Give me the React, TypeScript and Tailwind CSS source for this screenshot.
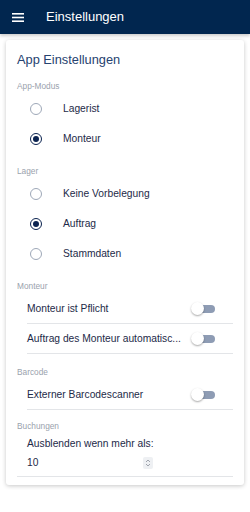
import React from "react";

const FONT = { fontFamily: '"Liberation Sans", Arial, sans-serif' };

function Radio({ checked }: { checked?: boolean }) {
  return (
    <span
      className={
        "flex h-[12px] w-[12px] items-center justify-center rounded-full border-[1.5px] " +
        (checked ? "border-[#0b2350]" : "border-[#9ea8b8]")
      }
    >
      {checked && <span className="h-[6px] w-[6px] rounded-full bg-[#0b2350]" />}
    </span>
  );
}

function Toggle() {
  return (
    <span className="relative flex h-[13px] w-[25px] items-center">
      <span className="ml-[4px] h-[8px] w-[20px] rounded-full bg-[#8e9cb4]" />
      <span className="absolute left-0 top-0 h-[13px] w-[13px] rounded-full bg-white shadow-[0_1px_2px_rgba(0,0,0,0.35)]" />
    </span>
  );
}

function SectionLabel({ children, className = "" }: { children: React.ReactNode; className?: string }) {
  return (
    <div className={"mb-[2px] flex h-[12px] items-center text-[8.3px] text-[#9aa2ad] " + className}>
      {children}
    </div>
  );
}

function RadioRow({ label, checked }: { label: string; checked?: boolean }) {
  return (
    <div className="flex h-[30px] items-center pl-[13px]">
      <Radio checked={checked} />
      <span className="ml-[21px] text-[10.25px] text-[#1d2a48]">{label}</span>
    </div>
  );
}

function ToggleRow({ label }: { label: string }) {
  return (
    <div className="ml-[10px] flex h-[30px] items-center border-b border-[#e3e5e8] pr-[17px]">
      <span className="whitespace-nowrap text-[10.25px] text-[#1d2a48]">{label}</span>
      <span className="ml-auto">
        <Toggle />
      </span>
    </div>
  );
}

export default function App() {
  return (
    <div className="h-[512px] w-[250px] bg-white" style={FONT}>
      <header className="flex h-[34px] items-center bg-[#01264f] shadow-[0_2px_3px_rgba(0,0,0,0.2)]">
        <svg width="12" height="9" viewBox="0 0 12 9" className="ml-[12px]" aria-hidden>
          <rect x="0" y="0" width="12" height="1.6" fill="white" />
          <rect x="0" y="3.7" width="12" height="1.6" fill="white" />
          <rect x="0" y="7.4" width="12" height="1.6" fill="white" />
        </svg>
        <span className="ml-[22px] text-[13px] font-medium text-white">Einstellungen</span>
      </header>

      <div className="mx-[6px] mt-[6px] rounded-[3px] bg-white px-[11px] pb-[8px] shadow-[0_1px_4px_rgba(0,0,0,0.22)]">
        <div className="flex h-[40px] items-center text-[12.8px] text-[#26426f]">
          App Einstellungen
        </div>

        <SectionLabel>App-Modus</SectionLabel>
        <RadioRow label="Lagerist" />
        <RadioRow label="Monteur" checked />

        <SectionLabel className="mt-[11px]">Lager</SectionLabel>
        <RadioRow label="Keine Vorbelegung" />
        <RadioRow label="Auftrag" checked />
        <RadioRow label="Stammdaten" />

        <SectionLabel className="mt-[11px]">Monteur</SectionLabel>
        <ToggleRow label="Monteur ist Pflicht" />
        <ToggleRow label="Auftrag des Monteur automatisc..." />

        <SectionLabel className="mt-[12px]">Barcode</SectionLabel>
        <ToggleRow label="Externer Barcodescanner" />

        <div className="border-b border-[#e3e5e8] pb-[3px]">
          <SectionLabel className="mt-[10px]">Buchungen</SectionLabel>
          <div className="ml-[10px] flex h-[19px] items-center text-[10.25px] text-[#1d2a48]">
            Ausblenden wenn mehr als:
          </div>
          <div className="ml-[10px] flex h-[20px] items-center">
            <span className="w-[116px] text-[10.25px] text-[#1d2a48]">10</span>
            <span className="flex h-[12px] w-[10px] items-center justify-center rounded-[2px] bg-[#eef0f3]">
              <svg width="6" height="8" viewBox="0 0 6 8" aria-hidden>
                <path d="M1 3 L3 1 L5 3 M1 5 L3 7 L5 5" fill="none" stroke="#8a909a" strokeWidth="0.8" />
              </svg>
            </span>
          </div>
        </div>
      </div>
    </div>
  );
}
